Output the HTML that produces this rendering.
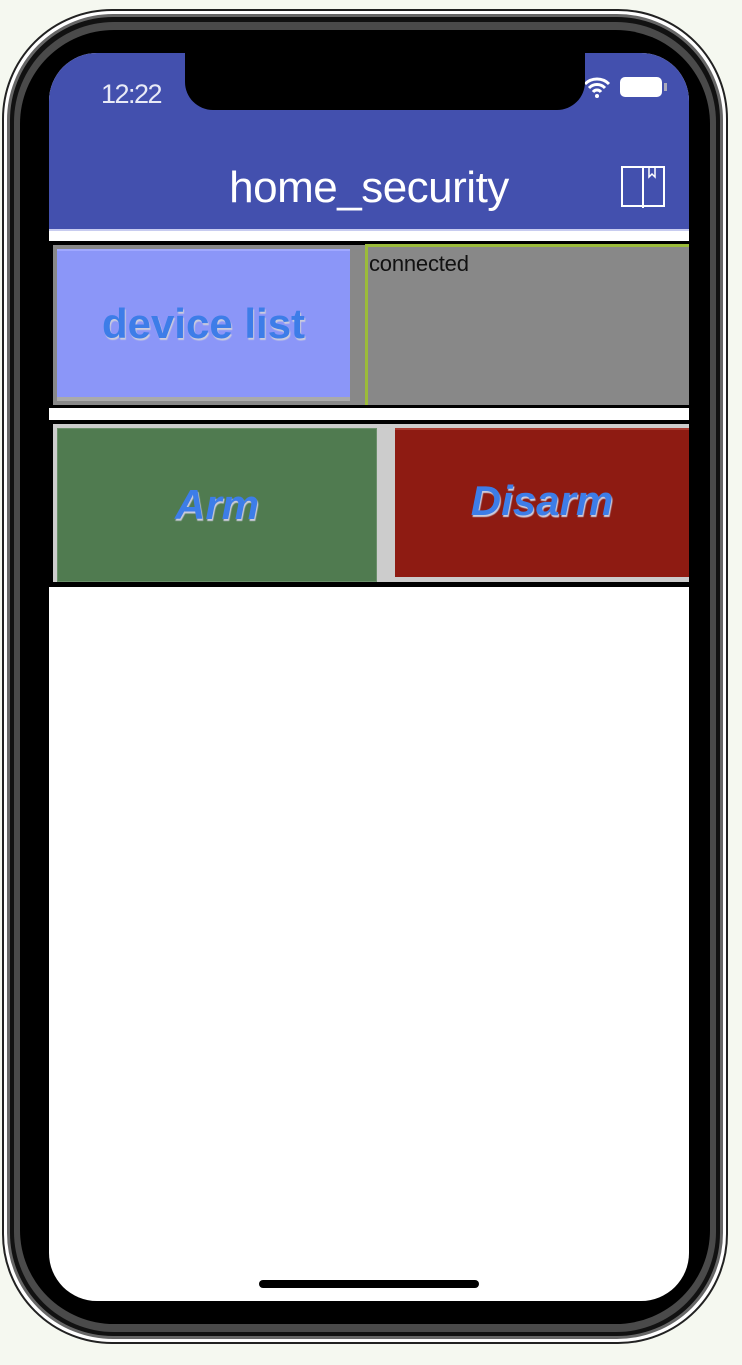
<!DOCTYPE html>
<html><head><style>
*{margin:0;padding:0;box-sizing:border-box}
body{width:742px;height:1365px;background:#f5f8f0;position:relative;overflow:hidden;font-family:"Liberation Sans",sans-serif}
.a{position:absolute}
</style></head><body>
<div class="a" style="left:2px;top:9px;width:726px;height:1335px;border-radius:110px;background:#fff;border:2px solid #222"></div>
<div class="a" style="left:7px;top:14px;width:716px;height:1325px;border-radius:106px;background:#111;border:3px solid #666"></div>
<div class="a" style="left:14px;top:22px;width:702px;height:1310px;border-radius:100px;background:#4a4a4a"></div>
<div class="a" style="left:20px;top:30px;width:690px;height:1294px;border-radius:94px;background:#000"></div>
<div class="a" style="left:49px;top:53px;width:640px;height:1248px;border-radius:48px;background:#fff;overflow:hidden">
  <div class="a" style="left:0;top:0;width:640px;height:176px;background:#4350ae"></div>
  <div class="a" style="left:0;top:176px;width:640px;height:2px;background:#c8ccf0"></div>
  <div class="a" style="left:52px;top:26px;color:#e8eaf6;font-size:27px;letter-spacing:-1.5px">12:22</div>
  <div class="a" style="left:0;top:110px;width:640px;text-align:center;color:#fff;font-size:44px;letter-spacing:-0.5px">home_security</div>
  <svg class="a" style="left:571px;top:112px" width="46" height="44" viewBox="0 0 46 44"><rect x="2" y="2" width="42" height="39" fill="none" stroke="#fff" stroke-width="2"/><line x1="23" y1="2" x2="23" y2="43" stroke="#fff" stroke-width="2"/><path d="M29 2v10l3-3 3 3V2" fill="none" stroke="#fff" stroke-width="1.5"/></svg>
  <svg class="a" style="left:533px;top:22px" width="30" height="24" viewBox="0 0 30 24"><path d="M3 9a17 17 0 0 1 24 0M7 13a11 11 0 0 1 16 0M11 17a5 5 0 0 1 8 0" fill="none" stroke="#fff" stroke-width="3"/><circle cx="15" cy="21" r="2" fill="#fff"/></svg>
  <div class="a" style="left:571px;top:24px;width:42px;height:20px;border-radius:5px;background:#fff"></div>
  <div class="a" style="left:615px;top:30px;width:3px;height:8px;background:#aab"></div>
  <div class="a" style="left:136px;top:0;width:400px;height:57px;background:#000;border-radius:0 0 28px 28px"></div>
  <!-- row 1 -->
  <div class="a" style="left:0;top:188px;width:640px;height:167px;background:#000"></div>
  <div class="a" style="left:4px;top:192px;width:636px;height:160px;background:#888"></div>
  <div class="a" style="left:8px;top:196px;width:293px;height:152px;background:#8b96f8;border-top:2px solid #a0a8ff;border-bottom:4px solid #aaa;display:flex;align-items:center;justify-content:center;color:#3d7de8;font-weight:bold;font-size:42px;text-shadow:1px 2px 1px #ccd">device list</div>
  <div class="a" style="left:316px;top:191px;width:324px;height:161px;background:#888;border-left:3px solid #9bbb3a;border-top:3px solid #9bbb3a;color:#111;font-size:22px;padding-left:1px;padding-top:5px;line-height:24px;letter-spacing:-0.2px">connected</div>
  <!-- row 2 -->
  <div class="a" style="left:0;top:367px;width:640px;height:167px;background:#000"></div>
  <div class="a" style="left:4px;top:371px;width:636px;height:158px;background:#ccc"></div>
  <div class="a" style="left:8px;top:375px;width:320px;height:154px;background:#507b50;border:1px solid #6a8f6a;display:flex;align-items:center;justify-content:center;color:#3d7de8;font-weight:bold;font-style:italic;font-size:42px;text-shadow:1px 2px 1px #ccd">Arm</div>
  <div class="a" style="left:346px;top:375px;width:294px;height:149px;background:#8e1b12;border-top:2px solid #a83a30;display:flex;align-items:center;justify-content:center;color:#3d7de8;font-weight:bold;font-style:italic;font-size:42px;text-shadow:1px 2px 1px #ccd;padding-bottom:6px">Disarm</div>
  <div class="a" style="left:210px;top:1227px;width:220px;height:8px;border-radius:4px;background:#000"></div>
</div>
</body></html>
